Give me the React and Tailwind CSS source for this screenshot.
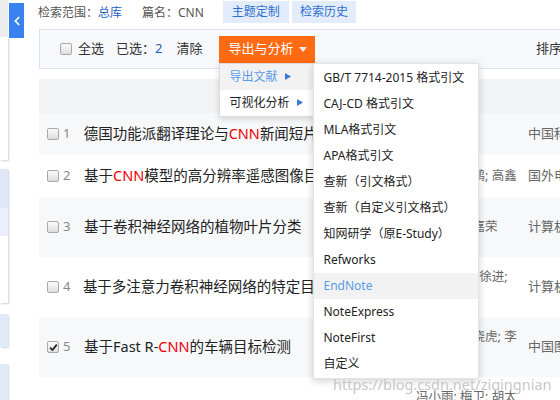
import React from 'react';
import { ChevronLeft } from 'lucide-react';

const FONT = { fontFamily: '"Noto Sans", "Noto Sans CJK SC", sans-serif' };

const rows = [
    { n: 1, h: 'h-[42px]', bg: 'bg-[#f7f8fa]', title: ['德国功能派翻译理论与', 'CNN', '新闻短片字幕翻译'], author: '', source: '中国科技翻译' },
    { n: 2, h: 'h-[42px]', bg: 'bg-white', title: ['基于', 'CNN', '模型的高分辨率遥感图像目标识别'], author: '王涛; 程海鹏; 高鑫', source: '国外电子测量' },
    { n: 3, h: 'h-[60px]', bg: 'bg-[#f7f8fa]', title: ['基于卷积神经网络的植物叶片分类', '', ''], author: '刘晓明; 王嘉荣', source: '计算机与现代化' },
    { n: 4, h: 'h-[60px]', bg: 'bg-white', title: ['基于多注意力卷积神经网络的特定目标情感分析', '', ''], author: '张丰; 李文; 徐进; 王明明', source: '计算机研究' },
    { n: 5, h: 'h-[60px]', bg: 'bg-[#f7f8fa]', title: ['基于Fast R-', 'CNN', '的车辆目标检测'], author: '王磊磊; 张晓虎; 李明杰', source: '中国图象图形', checked: true },
    { n: 6, h: 'h-[60px]', bg: 'bg-white', title: ['', '', ''], author: '冯小雨; 梅卫; 胡太宇; 李强', source: '', hide: true },
];

const exportItems = [
    'GB/T 7714-2015 格式引文',
    'CAJ-CD 格式引文',
    'MLA格式引文',
    'APA格式引文',
    '查新（引文格式）',
    '查新（自定义引文格式）',
    '知网研学（原E-Study）',
    'Refworks',
    'EndNote',
    'NoteExpress',
    'NoteFirst',
    '自定义',
];

const Checkbox = ({ checked }) => (
    <span className="w-[12px] h-[12px] rounded-[2px] border border-[#a9a9a9] bg-gradient-to-b from-[#fbfbfb] to-[#dedede] flex items-center justify-center shrink-0">
        {checked && (
            <svg width="9" height="9" viewBox="0 0 9 9">
                <path d="M1.2 4.6 L3.5 7 L7.8 1.6" stroke="#222" strokeWidth="1.8" fill="none" />
            </svg>
        )}
    </span>
);

const Tri = () => (
    <svg width="6" height="7" viewBox="0 0 6 7" className="ml-[7px]">
        <path d="M0 0 L6 3.5 L0 7 Z" fill="#3b7bd8" />
    </svg>
);

const App = () => {
    return (
        <div className="w-[560px] h-[400px] overflow-hidden relative bg-white flex items-start text-[#333]" style={FONT}>
            {/* scrolled-out sidebar */}
            <div className="w-[8px] flex flex-col shrink-0">
                <div className="h-[37px] shrink-0 bg-[#ececec]" />
                <div className="h-[123px] shrink-0 bg-white shadow-[1px_1px_2px_rgba(0,0,0,0.18)]" />
                <div className="h-[134px] shrink-0 mt-[9px] flex flex-col shadow-[1px_1px_2px_rgba(0,0,0,0.18)]">
                    <div className="h-[39px] bg-[#dfe8f8]" />
                    <div className="h-[28px] bg-[#eaf0fb]" />
                    <div className="flex-1 bg-white" />
                </div>
                <div className="h-[33px] shrink-0 mt-[11px] bg-[#e1eaf9] shadow-[1px_1px_2px_rgba(0,0,0,0.15)]" />
                <div className="h-[40px] shrink-0 mt-[17px] bg-[#e1eaf9] shadow-[1px_1px_2px_rgba(0,0,0,0.15)]" />
            </div>

            <div className="w-[31px] shrink-0 pl-[1px]">
                <div className="w-[15px] h-[35px] mt-[3px] bg-[#3a82f0] flex items-center justify-center">
                    <ChevronLeft size={14} strokeWidth={3} color="#fff" />
                </div>
            </div>

            {/* main */}
            <div className="flex-1 flex flex-col">
                <div className="h-[29px] shrink-0 flex items-start text-[12px] -ml-[1px]">
                    <span className="mt-[4px] text-[#555]">检索范围：</span>
                    <span className="mt-[4px] text-[#1f5fbf]">总库</span>
                    <span className="mt-[4px] ml-[20px] text-[#555]">篇名：CNN</span>
                    <span className="ml-[19px] mt-[1px] h-[22px] px-[9px] bg-[#e3ecfb] text-[#2c6fd0] flex items-center">主题定制</span>
                    <span className="ml-[3px] mt-[1px] h-[22px] px-[8px] bg-[#e3ecfb] text-[#2c6fd0] flex items-center">检索历史</span>
                </div>

                {/* toolbar */}
                <div className="h-[40px] shrink-0 border border-r-0 border-[#dde3eb] bg-[#f6f8fb] flex items-center text-[13px] pl-[20px]">
                    <Checkbox />
                    <span className="ml-[6px]">全选</span>
                    <span className="ml-[12px]">已选：</span>
                    <span className="text-[#1f5fbf]">2</span>
                    <span className="ml-[14px]">清除</span>
                    <div className="relative ml-[17px]">
                        <div className="w-[96px] h-[27px] bg-[#ff6a12] text-white flex items-center pl-[9px]">
                            <span className="text-[13px]">导出与分析</span>
                            <svg width="8" height="5" viewBox="0 0 8 5" className="ml-[5px]">
                                <path d="M0 0 L8 0 L4 5 Z" fill="#e9e9e9" />
                            </svg>
                        </div>
                        <div className="absolute left-0 top-[27px] w-[95px] bg-white border border-[#dcdcdc] shadow-[0_2px_6px_rgba(0,0,0,0.15)] z-10 text-[12px]">
                            <div className="h-[26px] bg-[#f2f2f2] text-[#5b9be6] flex items-center pl-[9px]">
                                导出文献<Tri />
                            </div>
                            <div className="h-[26px] flex items-center pl-[9px] text-[#222]">
                                可视化分析<Tri />
                            </div>
                        </div>
                        <div className="absolute left-[94px] top-[27px] w-[166px] bg-white border border-[#e3e3e3] shadow-[0_2px_8px_rgba(0,0,0,0.18)] z-10 text-[12px] text-[#222] pt-[1px] pb-[1px]">
                            {exportItems.map((it) => (
                                <div
                                    key={it}
                                    className={
                                        it === 'EndNote'
                                            ? 'h-[26px] flex items-center pl-[9px] bg-[#f2f2f2] text-[#5b9be6]'
                                            : 'h-[26px] flex items-center pl-[9px]'
                                    }
                                >
                                    {it}
                                </div>
                            ))}
                        </div>
                    </div>
                    <span className="ml-auto mr-[5px] whitespace-nowrap">排序：相关度</span>
                </div>

                {/* result table */}
                <div className="mt-[10px] shrink-0 flex flex-col">
                    <div className="h-[34px] shrink-0 bg-[#f2f3f5]" />
                    {rows.map((r) => (
                        <div key={r.n} className={`${r.h} ${r.bg} shrink-0 flex items-center`}>
                            <div className="w-[332px] pl-[8px] flex items-center shrink-0">
                                {!r.hide && (
                                    <>
                                        <Checkbox checked={r.checked} />
                                        <span className="w-[25px] pl-[4px] text-[13px] text-[#888]">{r.n}</span>
                                        <span className="text-[14.5px] whitespace-nowrap overflow-hidden text-[#222]">
                                            {r.title[0]}
                                            <span className="text-[#e00]">{r.title[1]}</span>
                                            {r.title[2]}
                                        </span>
                                    </>
                                )}
                            </div>
                            <div className="w-[104px] shrink-0 text-[12.5px] leading-[20px] text-[#666] ml-[45px]">
                                {r.author}
                            </div>
                            <div className="ml-[8px] text-[13px] text-[#666] whitespace-nowrap">{r.source}</div>
                        </div>
                    ))}
                </div>
            </div>

            <div className="absolute left-[333px] top-[374px] z-20 text-[14.5px] text-[rgba(160,160,160,0.6)] [text-shadow:0_0_2px_#fff] whitespace-nowrap pointer-events-none">
                https://blog.csdn.net/ziqingnian
            </div>
        </div>
    );
};

export default App;
